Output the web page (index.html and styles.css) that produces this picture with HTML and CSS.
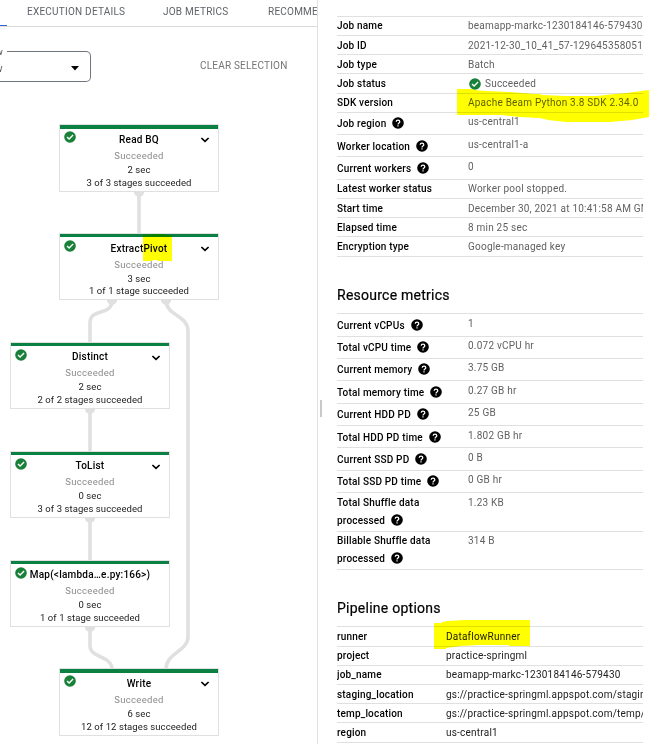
FILE: index.html
```
<!DOCTYPE html>
<html lang="en">
<head>
<meta charset="utf-8">
<title>Dataflow job</title>
<link rel="stylesheet" href="styles.css">
</head>
<body>
<svg class="defs" width="0" height="0">
  <symbol id="check" viewBox="0 0 12 12"><circle cx="6" cy="6" r="5.8" fill="#188038"/><path d="M3 6 5.1 8 9.1 4" fill="none" stroke="#fff" stroke-width="1.4"/></symbol>
  <symbol id="help" viewBox="0 0 12 12"><circle cx="6" cy="6" r="5.8" fill="#000"/><path d="M4.2 4.7C4.2 2.5 7.8 2.5 7.8 4.7 7.8 6 6 6 6 7.4" fill="none" stroke="#fff" stroke-width="1.25"/><path d="M5.4 8.3h1.2v1.3H5.4z" fill="#fff"/></symbol>
  <symbol id="chev" viewBox="0 0 10 6"><path d="M1.4 1 5 4.4 8.6 1" fill="none" stroke="#000" stroke-width="1.7"/></symbol>
</svg>
<div class="app">
  <main class="left">
    <nav class="tabs"><span class="active"></span><span class="tab t1">EXECUTION DETAILS</span><span class="tab t2">JOB METRICS</span><span class="tab t3">RECOMMENDATIONS</span></nav>
    <div class="toolbar">
      <div class="select"><span class="legend">w</span><span class="value">w</span><svg class="caret" width="8" height="5" viewBox="0 0 8 5"><path d="M0 0h8L4 4.6z"/></svg></div>
      <span class="clear">CLEAR SELECTION</span>
    </div>
    <div class="graph">
      <svg class="edges" width="317" height="744" viewBox="0 0 317 744">
        <g fill="none" stroke="#e0e0e0" stroke-width="3.6">
          <path d="M139 192V234"/><path d="M112 300C112 317 90 307 90 323V343"/>
          <path d="M166 300C166 316 188 315 188 331V637C188 651 166 653 166 669"/>
          <path d="M90 409V452M90 518V561M90 627V646C90 658 112 656 112 669"/>
        </g>
        <g fill="#e0e0e0"><path d="M134 192a5 5 0 0 0 10 0zM107 300a5 5 0 0 0 10 0zM161 300a5 5 0 0 0 10 0zM85 409a5 5 0 0 0 10 0zM85 518a5 5 0 0 0 10 0zM85 627a5 5 0 0 0 10 0z"/></g>
      </svg>
      <section class="node n1"><svg class="ok"><use href="#check"/></svg><svg class="chev"><use href="#chev"/></svg><h3>Read BQ</h3><p class="state">Succeeded</p><p class="sec">2 sec</p><p class="stages">3 of 3 stages succeeded</p></section>
      <section class="node n2"><svg class="ok"><use href="#check"/></svg><svg class="chev"><use href="#chev"/></svg><h3>ExtractPivot</h3><p class="state">Succeeded</p><p class="sec">3 sec</p><p class="stages">1 of 1 stage succeeded</p></section>
      <section class="node n3"><svg class="ok"><use href="#check"/></svg><svg class="chev"><use href="#chev"/></svg><h3>Distinct</h3><p class="state">Succeeded</p><p class="sec">2 sec</p><p class="stages">2 of 2 stages succeeded</p></section>
      <section class="node n4"><svg class="ok"><use href="#check"/></svg><svg class="chev"><use href="#chev"/></svg><h3>ToList</h3><p class="state">Succeeded</p><p class="sec">0 sec</p><p class="stages">3 of 3 stages succeeded</p></section>
      <section class="node n5"><svg class="ok"><use href="#check"/></svg><h3>Map(&lt;lambda…e.py:166&gt;)</h3><p class="state">Succeeded</p><p class="sec">0 sec</p><p class="stages">1 of 1 stage succeeded</p></section>
      <section class="node n6"><svg class="ok"><use href="#check"/></svg><svg class="chev"><use href="#chev"/></svg><h3>Write</h3><p class="state">Succeeded</p><p class="sec">6 sec</p><p class="stages">12 of 12 stages succeeded</p></section>
    </div>
  </main>
  <div class="gutter"><span class="grip"></span></div>
  <aside class="info">
    <dl class="table">
      <div class="row"><dt>Job name</dt><dd>beamapp-markc-1230184146-579430</dd></div>
      <div class="row low"><dt>Job ID</dt><dd>2021-12-30_10_41_57-129645358051</dd></div>
      <div class="row low"><dt>Job type</dt><dd>Batch</dd></div>
      <div class="row low h20"><dt>Job status</dt><dd><svg class="status"><use href="#check"/></svg>Succeeded</dd></div>
      <div class="row"><dt>SDK version</dt><dd>Apache Beam Python 3.8 SDK 2.34.0</dd></div>
      <div class="row h22"><dt>Job region<svg class="help"><use href="#help"/></svg></dt><dd>us-central1</dd></div>
      <div class="row low h22"><dt>Worker location<svg class="help"><use href="#help"/></svg></dt><dd>us-central1-a</dd></div>
      <div class="row low h23"><dt>Current workers<svg class="help"><use href="#help"/></svg></dt><dd>0</dd></div>
      <div class="row"><dt>Latest worker status</dt><dd>Worker pool stopped.</dd></div>
      <div class="row low"><dt>Start time</dt><dd>December 30, 2021 at 10:41:58 AM GMT-8</dd></div>
      <div class="row low"><dt>Elapsed time</dt><dd>8 min 25 sec</dd></div>
      <div class="row low h20"><dt>Encryption type</dt><dd>Google-managed key</dd></div>
    </dl>
    <h2>Resource metrics</h2>
    <dl class="table">
      <div class="row low h23"><dt>Current vCPUs<svg class="help"><use href="#help"/></svg></dt><dd>1</dd></div>
      <div class="row h22"><dt>Total vCPU time<svg class="help"><use href="#help"/></svg></dt><dd>0.072 vCPU hr</dd></div>
      <div class="row h22"><dt>Current memory<svg class="help"><use href="#help"/></svg></dt><dd>3.75 GB</dd></div>
      <div class="row low h23"><dt>Total memory time<svg class="help"><use href="#help"/></svg></dt><dd>0.27 GB hr</dd></div>
      <div class="row h22"><dt>Current HDD PD<svg class="help"><use href="#help"/></svg></dt><dd>25 GB</dd></div>
      <div class="row low h22"><dt>Total HDD PD time<svg class="help"><use href="#help"/></svg></dt><dd>1.802 GB hr</dd></div>
      <div class="row low h23"><dt>Current SSD PD<svg class="help"><use href="#help"/></svg></dt><dd>0 B</dd></div>
      <div class="row h22"><dt>Total SSD PD time<svg class="help"><use href="#help"/></svg></dt><dd>0 GB hr</dd></div>
      <div class="row low h39"><dt>Total Shuffle data<br>processed<svg class="help"><use href="#help"/></svg></dt><dd>1.23 KB</dd></div>
      <div class="row h38"><dt>Billable Shuffle data<br>processed<svg class="help"><use href="#help"/></svg></dt><dd>314 B</dd></div>
    </dl>
    <h2>Pipeline options</h2>
    <dl class="table options">
      <div class="row low h20"><dt>runner</dt><dd>DataflowRunner</dd></div>
      <div class="row"><dt>project</dt><dd>practice-springml</dd></div>
      <div class="row"><dt>job_name</dt><dd>beamapp-markc-1230184146-579430</dd></div>
      <div class="row low"><dt>staging_location</dt><dd>gs://practice-springml.appspot.com/staging</dd></div>
      <div class="row low"><dt>temp_location</dt><dd>gs://practice-springml.appspot.com/temp/</dd></div>
      <div class="row low h20"><dt>region</dt><dd>us-central1</dd></div>
    </dl>
  </aside>
  <svg class="marker" width="649" height="744" viewBox="0 0 649 744"><g fill="#ff0">
    <path d="M143 235 153 234H164L172 236V261H158L157 260H153L152 261H143z"/>
    <path d="M457 89H473L474 90 486 91 509 92 535 94H540L542 95 565 96H597L614 94 627 93 649 90V117L632 120 610 122H566L548 120 540 118 520 117 502 115H457z"/>
    <path d="M434 623H442V622L448 621 465 620V620H530V646H509V645H478L461 646 446 648V649H434z"/>
  </g></svg>
</div>
</body>
</html>
```
FILE: styles.css
```
* { box-sizing: border-box; }
body { margin: 0; background: #fff; font-family: Roboto, "Liberation Sans", sans-serif; font-size: 10px; color: #212121; }
h2, h3, p, dl, dd { margin: 0; }
.defs { position: absolute; }
.app { position: relative; display: flex; width: 649px; height: 744px; overflow: hidden; }

.left { width: 318px; border-right: 1px solid #e0e0e0; overflow: hidden; flex: none; }
.tabs { position: relative; display: flex; height: 27px; border-bottom: 1px solid #dcdcdc; color: #5f6368; padding: 5px 0 0 27px; line-height: 14px; white-space: nowrap; letter-spacing: .23px; }
.active { position: absolute; left: 0; bottom: 0; width: 7px; height: 1px; background: #3367d6; }
.t1 { width: 136px; }
.t2 { width: 105px; }
.tab { flex: none; }
.toolbar { display: flex; height: 64px; padding-top: 24px; }
.select { position: relative; width: 91px; height: 31px; border: 1px solid #6f757d; border-left: 0; border-radius: 0 5px 5px 0; }
.legend { position: absolute; left: -4px; top: -7px; width: 11px; line-height: 14px; background: #fff; font-size: 9px; color: #444; }
.value { position: absolute; left: -5px; top: 10px; line-height: 14px; color: #555; }
.caret { position: absolute; left: 71px; top: 14px; }
.clear { margin: 8px 0 0 109px; line-height: 14px; color: #757575; letter-spacing: .2px; }

.edges { position: absolute; left: 0; top: 0; }
.node { position: absolute; width: 160px; height: 67px; border: 1px solid #e0e0e0; background: #fff; text-align: center; white-space: nowrap; }
.node::before { content: ""; display: block; height: 3px; background: #0b8043; margin-bottom: 4px; }
.n1 { left: 59px; top: 124px; height: 68px; }
.n1::before, .n6::before { height: 4px; }
.n2 { left: 59px; top: 233px; }
.n2::before { margin-bottom: 5px; }
.n3 { left: 10px; top: 342px; }
.n4 { left: 10px; top: 451px; }
.n5 { left: 10px; top: 560px; }
.n6 { left: 59px; top: 668px; height: 68px; }
.node h3 { font-size: 10px; font-weight: 500; line-height: 14px; letter-spacing: .22px; color: #000; }
.node p { font-size: 9.5px; line-height: 13px; letter-spacing: .08px; }
.node .state { line-height: 14px; margin: 2px 0 0; color: #8a8a8a; letter-spacing: .3px; }
.n2 .stages { margin-top: -1px; }
.ok { position: absolute; left: 4px; top: 6px; width: 12px; height: 12px; }
.chev { position: absolute; left: 140px; top: 12px; width: 10px; height: 6px; }

.gutter { width: 19px; flex: none; padding: 400px 0 0 2px; }
.grip { display: block; width: 2px; height: 17px; background: #c8c8c8; }
.info { width: 306px; padding-top: 16px; overflow: hidden; flex: none; }
.table { border-top: 1px solid #e0e0e0; }
.row { display: grid; grid-template-columns: 131px 1fr; height: 19px; border-bottom: 1px solid #e0e0e0; line-height: 14px; padding-top: 2px; white-space: nowrap; letter-spacing: .22px; }
.low { padding-top: 3px; }
.options .row { grid-template-columns: 109px 1fr; }
.h20 { height: 20px; }
.h22 { height: 22px; }
.h23 { height: 23px; }
.h39 { height: 39px; }
.h38 { height: 38px; }
dt { color: #000; font-weight: 500; letter-spacing: .18px; }
dd { color: #616161; }
.options dd { color: #212121; }
.h22 dt, .h23 dt { padding-top: 2px; }
.h38 dt, .h39 dt { line-height: 18px; margin-top: -2px; }
.help { width: 12px; height: 12px; margin-left: 6px; vertical-align: -2.4px; }
.status { width: 12px; height: 12px; margin: 0 4px 0 1px; vertical-align: -3px; }
h2 { font-size: 14px; font-weight: 400; line-height: 20px; color: #000; height: 56px; padding-top: 28px; letter-spacing: .25px; -webkit-text-stroke: .2px #000; }
.marker { position: absolute; left: 0; top: 0; mix-blend-mode: multiply; }
```
